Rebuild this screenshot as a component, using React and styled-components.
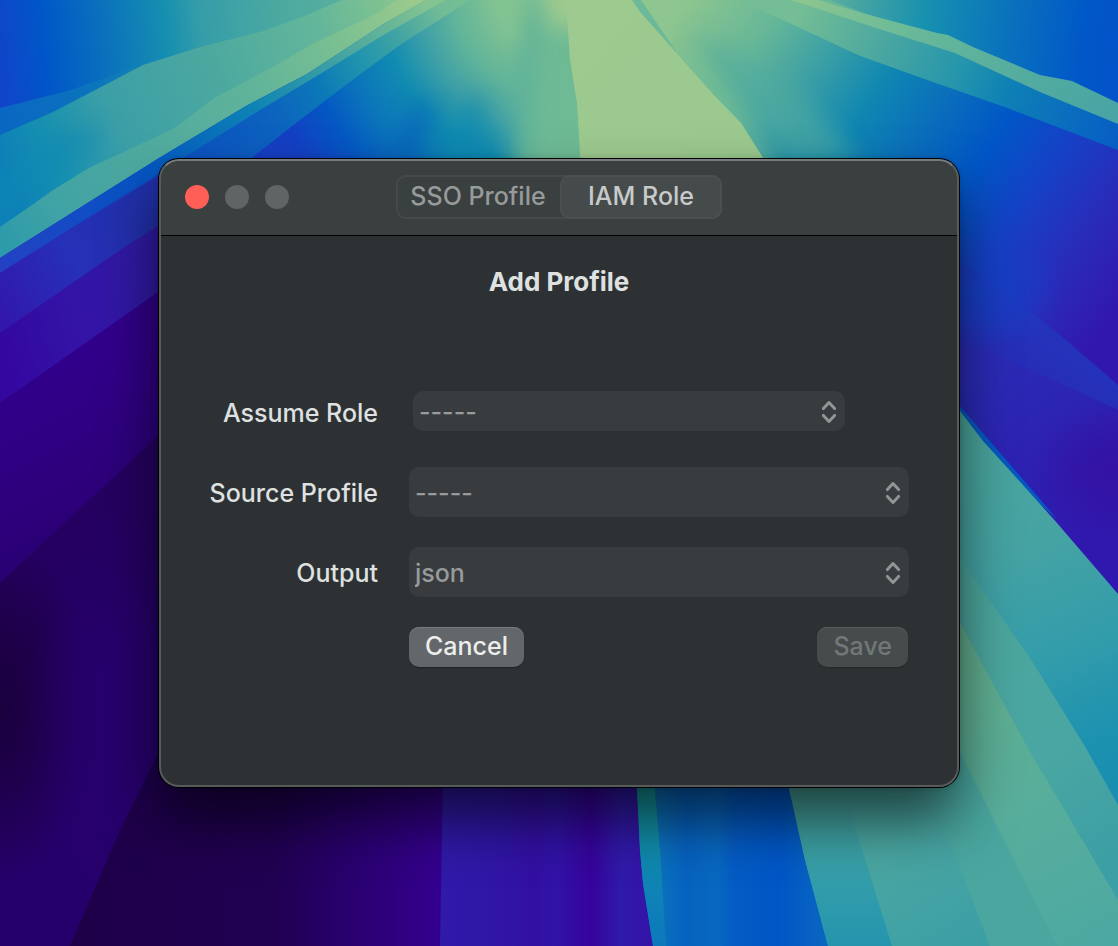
import React, { useState } from "react";
import styled, { createGlobalStyle } from "styled-components";

const GlobalStyle = createGlobalStyle`
  *, *::before, *::after { box-sizing: border-box; }
  body { margin: 0; background: #1e0050; }
  body, button, select {
    font-family: Inter, "Liberation Sans", sans-serif;
    font-size: 25px;
    font-weight: 500;
    line-height: 32px;
  }
`;

const Desktop = styled.main`
  position: relative;
  min-height: 100vh;
  display: flex;
  align-items: center;
  justify-content: center;
  padding: 24px;
  overflow: hidden;
`;

const WallpaperArt = styled.svg`
  position: absolute;
  inset: 0;
  width: 100%;
  height: 100%;
`;

const Window = styled.section`
  position: relative;
  width: 100%;
  max-width: 800px;
  border-radius: 20px;
  overflow: hidden;
  background: #2d3133;
  color: #dfe1e1;

  &::after {
    content: "";
    position: absolute;
    inset: 0;
    border-radius: inherit;
    border: 2px solid #575b5c;
    border-top-color: #777c7c;
    pointer-events: none;
  }
`;

const WindowShadow = styled.div`
  position: relative;
  width: 100%;
  max-width: 800px;
  border-radius: 20px;
  box-shadow: 0 0 0 1px #000, 0 0 6px rgba(0, 0, 0, 0.2), 0 34px 56px rgba(0, 0, 0, 0.6);
`;

const TitleBar = styled.header`
  display: grid;
  grid-template-columns: 1fr auto 1fr;
  align-items: center;
  padding: 16px 26px;
  background: #3a3f3f;
  border-bottom: 1px solid #000;
`;

const Lights = styled.div`
  display: flex;
  gap: 16px;
`;

const Light = styled.button`
  width: 24px;
  height: 24px;
  padding: 0;
  border: 0;
  border-radius: 50%;
  background: ${(p) => p.$color};
`;

const Segments = styled.div`
  display: flex;
  height: 44px;
  border-radius: 10px;
  box-shadow: inset 0 0 0 2px #45494a;
`;

const Segment = styled.button`
  width: ${(p) => (p.$active ? 162 : 164)}px;
  padding: 0 0 2px;
  border: 0;
  border-radius: 10px;
  background: ${(p) => (p.$active ? "#454a4a" : "transparent")};
  box-shadow: ${(p) => (p.$active ? "inset 0 0 0 2px #4b4f4f" : "none")};
  color: ${(p) => (p.$active ? "#c8caca" : "#979a9a")};
  white-space: nowrap;
`;

const Content = styled.div`
  padding: 30px 50px 120px;
`;

const Title = styled.h1`
  margin: 0 0 89px;
  font-size: 26px;
  line-height: 32px;
  font-weight: 700;
  text-align: center;
`;

const Form = styled.form`
  display: grid;
  grid-template-columns: 169px minmax(0, 1fr);
  column-gap: 31px;
  row-gap: 30px;
`;

const Label = styled.label`
  align-self: center;
  padding-top: 2px;
  text-align: right;
  white-space: nowrap;
`;

const Picker = styled.div`
  display: grid;
  align-items: center;
  height: ${(p) => (p.$compact ? 40 : 50)}px;
  margin: ${(p) => (p.$compact ? "4px 64px 6px 4px" : "0")};
  border-radius: 10px;
  background: #383c3e;
`;

const Select = styled.select`
  grid-area: 1 / 1;
  width: 100%;
  height: 100%;
  padding: 2px 40px 0 6px;
  border: 0;
  border-radius: 10px;
  appearance: none;
  background: transparent;
  color: #989b9c;
`;

const ChevronArt = styled.svg`
  grid-area: 1 / 1;
  justify-self: end;
  width: 16px;
  height: 24px;
  margin: 2px 8px 0 0;
  pointer-events: none;
`;

const Actions = styled.div`
  grid-column: 2;
  display: flex;
  justify-content: space-between;
  padding-right: 1px;
`;

const PushButton = styled.button`
  height: 40px;
  padding: 0 16px 2px;
  border: 0;
  border-radius: 10px;
  background: #636769;
  color: #eceded;
  box-shadow: inset 0 1px 0 #777b7c, 0 1px 1px rgba(0, 0, 0, 0.3);

  &:disabled {
    background: #464b4c;
    color: #727778;
    box-shadow: inset 0 1px 0 #565b5c, 0 1px 1px rgba(0, 0, 0, 0.2);
  }
`;

function Chevrons() {
  return (
    <ChevronArt viewBox="0 0 16 24" fill="none" stroke="#929596" strokeWidth="3" strokeLinecap="round" strokeLinejoin="round" aria-hidden="true">
      <path d="M2.4 8.6 8 2.6l5.6 6M2.4 15.4l5.6 6 5.6-6" />
    </ChevronArt>
  );
}

function Field({ id, label, options, compact }) {
  return (
    <>
      <Label htmlFor={id}>{label}</Label>
      <Picker $compact={compact}>
        <Select id={id}>
          {options.map((o) => (
            <option key={o}>{o}</option>
          ))}
        </Select>
        <Chevrons />
      </Picker>
    </>
  );
}

/* Gradient in canvas coordinates, from (x1,y1) to (x2,y2). */
function Grad({ id, from, to, stops }) {
  return (
    <linearGradient id={id} gradientUnits="userSpaceOnUse" x1={from[0]} y1={from[1]} x2={to[0]} y2={to[1]}>
      {stops.map(([offset, color]) => (
        <stop key={offset} offset={offset} stopColor={color} />
      ))}
    </linearGradient>
  );
}

/* Round patch of one colour that fades out to nothing. */
function Glow({ id, color, strength }) {
  return (
    <radialGradient id={id}>
      <stop offset="0" stopColor={color} stopOpacity={strength} />
      <stop offset="0.5" stopColor={color} stopOpacity={strength * 0.6} />
      <stop offset="1" stopColor={color} stopOpacity="0" />
    </radialGradient>
  );
}

function Wallpaper() {
  return (
    <WallpaperArt viewBox="0 0 1118 946" preserveAspectRatio="xMidYMid slice" aria-hidden="true">
      <defs>
        <Grad id="sky" from={[0, 60]} to={[560, 0]} stops={[[0, "#1045c9"], [0.08, "#0056c8"], [0.2, "#0b74bb"], [0.3, "#168fb0"], [0.36, "#359da9"], [0.5, "#4ba9a1"], [0.65, "#5bb19c"], [0.8, "#7fc291"], [1, "#9ac98e"]]} />
        <Grad id="haze" from={[0, 110]} to={[200, 47]} stops={[[0, "#0a66c3"], [0.5, "#0b76bb"], [1, "#2595ad"]]} />
        <Grad id="mist" from={[0, 160]} to={[400, 0]} stops={[[0, "#0c80b8"], [0.12, "#1790b0"], [0.28, "#3c9fa7"], [0.55, "#4da99f"], [0.8, "#63b69a"], [1, "#86c58f"]]} />
        <Grad id="ridge" from={[0, 245]} to={[420, 0]} stops={[[0, "#2c9aaa"], [0.13, "#3fa2a5"], [0.35, "#4faa9f"], [0.6, "#5fb39a"], [0.8, "#78bf92"], [1, "#9dca8c"]]} />
        <radialGradient id="slope" gradientUnits="userSpaceOnUse" cx="560" cy="-10" r="640">
          <stop offset="0.1" stopColor="#83c392" />
          <stop offset="0.17" stopColor="#60b49a" />
          <stop offset="0.22" stopColor="#41a1a6" />
          <stop offset="0.28" stopColor="#118cb1" />
          <stop offset="0.35" stopColor="#0b74ba" />
          <stop offset="0.41" stopColor="#0457c3" />
          <stop offset="0.48" stopColor="#143fc4" />
          <stop offset="0.7" stopColor="#1f3abf" />
          <stop offset="1" stopColor="#2c20b2" />
        </radialGradient>
        <Grad id="slopeBand" from={[160, 160]} to={[440, 10]} stops={[[0, "#0653c3"], [0.35, "#0a69bd"], [0.55, "#0d80b5"], [0.7, "#249aac"], [0.85, "#4ca99f"], [1, "#78bf94"]]} />
        <Grad id="slopeEdge" from={[0, 270]} to={[426, 0]} stops={[[0, "#2440c4"], [0.35, "#0456c4"], [0.6, "#0d84b4"], [0.8, "#45a4a2"], [1, "#84c490"]]} />
        <Grad id="violetA" from={[0, 320]} to={[160, 220]} stops={[[0, "#3217ad"], [0.5, "#2630b8"], [1, "#2030a8"]]} />
        <Grad id="violetB" from={[0, 350]} to={[160, 310]} stops={[[0, "#3407a0"], [0.5, "#3314a6"], [1, "#301aa4"]]} />
        <Grad id="violetC" from={[20, 390]} to={[90, 530]} stops={[[0, "#31008a"], [0.4, "#2f0082"], [1, "#2a0074"]]} />
        <Grad id="violetD" from={[20, 560]} to={[90, 680]} stops={[[0, "#250060"], [0.5, "#240060"], [1, "#26006a"]]} />
        <Grad id="floor" from={[70, 0]} to={[442, 0]} stops={[[0, "#1d0048"], [0.55, "#200052"], [0.72, "#28006a"], [1, "#34008f"]]} />
        <Grad id="indigo" from={[440, 0]} to={[650, 0]} stops={[[0, "#2f1aaa"], [0.3, "#3015a6"], [0.45, "#330fa2"], [0.55, "#3013a8"], [0.72, "#36039c"], [0.86, "#2f1aaa"], [1, "#3414a8"]]} />
        <Grad id="azure" from={[640, 0]} to={[825, 0]} stops={[[0, "#0b78bb"], [0.12, "#0a70bc"], [0.25, "#0662c0"], [0.42, "#0868c0"], [0.5, "#045cc4"], [0.75, "#0056c6"], [1, "#0a66c0"]]} />
        <Grad id="azureEdge" from={[0, 788]} to={[0, 946]} stops={[[0, "#149a9e"], [0.5, "#0f88b2"], [1, "#0c78bc"]]} />
        <Grad id="lagoonA" from={[0, 788]} to={[0, 946]} stops={[[0, "#4ca79e"], [0.6, "#329daa"], [1, "#2595ae"]]} />
        <Grad id="lagoonB" from={[960, 420]} to={[1118, 800]} stops={[[0, "#4aa59b"], [0.35, "#45a3a3"], [0.6, "#349daa"], [0.85, "#1c91b0"], [1, "#188eb0"]]} />
        <Grad id="lagoonC" from={[960, 600]} to={[1118, 860]} stops={[[0, "#4ca69c"], [0.6, "#49a6a2"], [1, "#3c9fa5"]]} />
        <Grad id="lagoonD" from={[960, 640]} to={[1118, 940]} stops={[[0, "#62ad8c"], [0.5, "#58ae9b"], [1, "#4ca8a2"]]} />
        <Grad id="beam" from={[560, 0]} to={[740, 158]} stops={[[0, "#9eca8f"], [1, "#9ac88e"]]} />
        <Grad id="rightSky" from={[800, 0]} to={[1118, 40]} stops={[[0, "#6cb999"], [0.18, "#46a4a2"], [0.4, "#1690b0"], [0.65, "#0a72bc"], [0.9, "#0057c8"], [1, "#0453c8"]]} />
        <Grad id="ribbon" from={[795, 0]} to={[1118, 115]} stops={[[0, "#8ec78f"], [0.35, "#69b999"], [0.7, "#53ac9f"], [1, "#48a4a5"]]} />
        <Grad id="rightBand" from={[800, 10]} to={[1118, 140]} stops={[[0, "#74bd95"], [0.25, "#4ca8a0"], [0.5, "#2495ac"], [0.65, "#0e80b5"], [0.85, "#0a6cbf"], [1, "#065ec4"]]} />
        <Grad id="rightMain" from={[670, 20]} to={[1110, 320]} stops={[[0, "#8fc68f"], [0.16, "#66b798"], [0.28, "#3b9fa5"], [0.4, "#0e86b2"], [0.52, "#0a6cbc"], [0.63, "#0056c6"], [0.74, "#1542c6"], [0.88, "#2a2ab8"], [1, "#3217ae"]]} />
        <Grad id="rightLow" from={[1000, 360]} to={[1110, 520]} stops={[[0, "#2a2bb6"], [1, "#3018ae"]]} />
        <Grad id="rightStripe" from={[1050, 325]} to={[1010, 390]} stops={[[0, "#2433bb"], [0.4, "#2530b9"], [1, "#2b28b5"]]} />
        <Glow id="glowNight" color="#180038" strength={0.95} />
        <Glow id="glowViolet" color="#3411a2" strength={0.9} />
        <Glow id="glowBlue" color="#1440c6" strength={0.9} />
        <Glow id="glowPlum" color="#28006e" strength={0.8} />
        <filter id="soft" x="-40%" y="-40%" width="180%" height="180%" colorInterpolationFilters="sRGB"><feGaussianBlur stdDeviation="11" /></filter>
        <clipPath id="slopeClip"><path d="M0 258 159 158 246 106 307 74 385 23 426 0H590V240H160L0 335Z" /></clipPath>
        <clipPath id="rightClip"><path d="M641 0 680 57 712 93 741 123 763 158V240H940V388L1118 594V150L1005 107 933 82 858 55 760 0Z" /></clipPath>
        <clipPath id="nightClip"><path d="M0 583 158 436 200 400V946H0Z" /></clipPath>
      </defs>

      <rect width="1118" height="946" fill="#220058" />

      <path d="M0 0H600V160H0Z" fill="url(#sky)" />
      <path d="M0 108 71 90 150 62 200 47 160 140 0 160Z" fill="url(#haze)" />
      <path d="M0 135 53 112 143 65 200 47 260 32 307 15 342 0H440L200 160 0 260Z" fill="url(#mist)" />
      <path d="M-20 190 60 130 110 130 70 170 -20 225Z" fill="#1089b3" opacity=".6" filter="url(#soft)" />
      <path d="M0 227 32 205 53 190 89 168 175 128 214 98 271 68 314 43 378 13 396 0H440L200 160 0 270Z" fill="url(#ridge)" />

      <g clipPath="url(#slopeClip)">
        <rect width="600" height="340" fill="url(#slope)" />
        <path d="M0 276 159 173 307 80 426 0H470L400 45 355 78 296 123 230 175 0 320Z" fill="url(#slopeBand)" opacity=".8" />
        <path d="M0 273 159 173 260 110 320 74 385 34 446 0V-20L-10 240Z" fill="url(#slopeEdge)" />
        <path d="M385 175 415 105 435 100 410 175Z" fill="#0456bd" opacity=".6" filter="url(#soft)" />
        <path d="M440 180 460 110 480 90 490 180Z" fill="#0e88b0" opacity=".7" filter="url(#soft)" />
        <path d="M512 200 515 60 540 -20H620V200Z" fill="#5fb29a" filter="url(#soft)" />
        <path d="M530 200 535 40 550 -20H620V200Z" fill="#72bc94" opacity=".8" filter="url(#soft)" />
        <path d="M530 -40H640V30L550 28Z" fill="#9eca8e" filter="url(#soft)" />
      </g>

      <path d="M0 273 170 168V225L0 333Z" fill="url(#violetA)" />
      <path d="M0 333 120 250 180 212V280L0 403Z" fill="url(#violetB)" />
      <path d="M0 403 158 292 200 265V410L0 583Z" fill="url(#violetC)" />
      <g clipPath="url(#nightClip)">
        <path d="M0 400H200V946H0Z" fill="url(#violetD)" />
        <ellipse cx="-10" cy="710" rx="110" ry="170" fill="url(#glowNight)" />
        <ellipse cx="110" cy="720" rx="80" ry="220" fill="url(#glowPlum)" />
      </g>
      <path d="M70 946 120 830 165 740H450V946Z" fill="url(#floor)" />

      <path d="M443 780H655V946H440Z" fill="url(#indigo)" />
      <path d="M637 780V788L640 850 643 883 653 946H840V780Z" fill="url(#azure)" />
      <path d="M637 780V788L640 850 643 883 653 946H666L660 850 654 780Z" fill="url(#azureEdge)" />

      <path d="M590 0H1118V600L940 420V240H590Z" fill="url(#rightSky)" />
      <g clipPath="url(#rightClip)">
        <path d="M570 0H1118V600H570Z" fill="url(#rightMain)" />
        <path d="M690 30 790 80 860 160H800L735 100Z" fill="#50aa9f" opacity=".6" filter="url(#soft)" />
        <path d="M680 50 740 110 775 180H740L700 100Z" fill="#7cc092" opacity=".6" filter="url(#soft)" />
        <path d="M940 250 985 277 1060 335 1118 385V410L1030 370 940 330Z" fill="url(#rightStripe)" />
        <path d="M940 330 1030 370 1118 410V620L940 440Z" fill="url(#rightLow)" />
        <ellipse cx="975" cy="290" rx="90" ry="60" fill="url(#glowBlue)" />
        <ellipse cx="1118" cy="470" rx="90" ry="70" fill="url(#glowViolet)" />
      </g>
      <path d="M740 0H830L1118 110V150L1005 107 933 82 858 55Z" fill="url(#rightBand)" />
      <path d="M791 0H819L862 13 937 33 948 35 973 47 1040 75 1072 81 1118 103V124L1040 92 955 53 873 27Z" fill="url(#ribbon)" />
      <path d="M566 0H632L641 13 680 57 712 93 741 123 763 158 770 170H581L577 103 570 60Z" fill="url(#beam)" />

      <path d="M955 400 983 433 1057 519 1023 490 955 410Z" fill="#0558c0" />
      <path d="M950 400 960 411 983 441 1023 485 1057 523 1118 594V946H828L805 860 789 788 780 740H950Z" fill="url(#lagoonB)" />
      <path d="M780 760 789 788 805 860 828 946H960V760Z" fill="url(#lagoonA)" />
      <path d="M940 530 960 558 1030 658 1083 743 1118 805V946H892L843 788 830 750H940Z" fill="url(#lagoonC)" />
      <path d="M940 595 960 623 1030 752 1118 900V946H990L930 787 900 700Z" fill="url(#lagoonD)" />
      <path d="M940 700 960 752 1057 946H990L930 787Z" fill="#4aa69f" />
    </WallpaperArt>
  );
}

const TABS = ["SSO Profile", "IAM Role"];

export default function App() {
  const [tab, setTab] = useState("IAM Role");
  return (
    <Desktop>
      <GlobalStyle />
      <Wallpaper />
      <WindowShadow>
        <Window aria-labelledby="title">
          <TitleBar>
            <Lights>
              <Light $color="#ff5f57" aria-label="Close" />
              <Light $color="#5f6465" aria-label="Minimize" disabled />
              <Light $color="#5f6465" aria-label="Zoom" disabled />
            </Lights>
            <Segments role="group" aria-label="Profile type">
              {TABS.map((name) => (
                <Segment key={name} type="button" $active={name === tab} aria-pressed={name === tab} onClick={() => setTab(name)}>
                  {name}
                </Segment>
              ))}
            </Segments>
          </TitleBar>
          <Content>
            <Title id="title">Add Profile</Title>
            <Form onSubmit={(e) => e.preventDefault()}>
              <Field id="role" label="Assume Role" options={["-----"]} compact />
              <Field id="source" label="Source Profile" options={["-----"]} />
              <Field id="output" label="Output" options={["json"]} />
              <Actions>
                <PushButton type="button">Cancel</PushButton>
                <PushButton type="submit" disabled>Save</PushButton>
              </Actions>
            </Form>
          </Content>
        </Window>
      </WindowShadow>
    </Desktop>
  );
}
